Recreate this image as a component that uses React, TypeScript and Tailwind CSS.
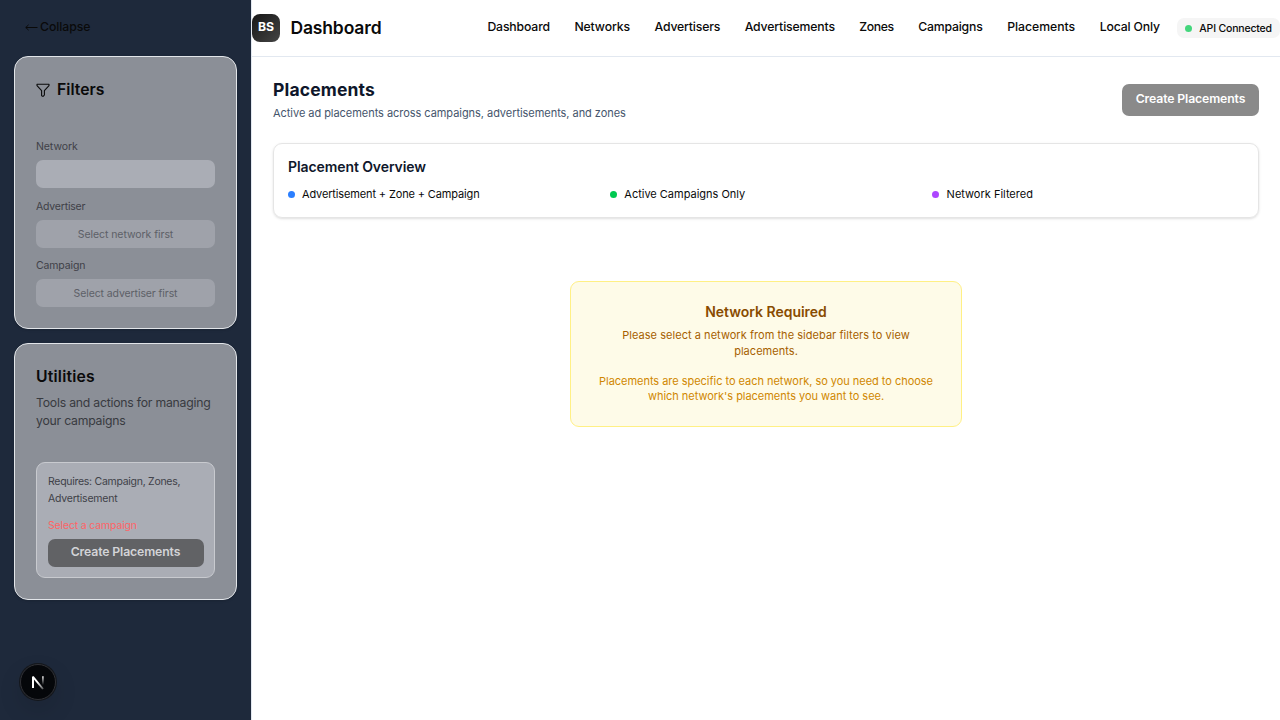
import type { ReactNode } from "react";

const navItems = [
  { label: "Dashboard", box: "w-[87px] tracking-[-0.15px]" },
  { label: "Networks", box: "w-[80.2px] tracking-[-0.12px]" },
  { label: "Advertisers", box: "w-[90.1px] tracking-[-0.18px]" },
  { label: "Advertisements", box: "w-[114.5px] tracking-[-0.15px]" },
  { label: "Zones", box: "w-[59px] tracking-[-0.35px]" },
  { label: "Campaigns", box: "w-[89px] tracking-[-0.19px]" },
  { label: "Placements", box: "w-[92.5px] tracking-[-0.03px]" },
  { label: "Local Only", box: "w-[77.2px] tracking-[-0.16px]" },
];

function SidebarCard({ className, children }: { className: string; children: ReactNode }) {
  return (
    <section className={`flex flex-col rounded-[14px] border border-[#e2e5e9] bg-[#8b8f97] px-[21px] shadow-sm ${className}`}>
      {children}
    </section>
  );
}

function FilterField({ label, labelClass, children }: { label: string; labelClass: string; children: ReactNode }) {
  return (
    <div className="flex flex-col">
      <span className={`mb-[6px] h-[14px] text-[10.5px] leading-[14px] text-[#404148] ${labelClass}`}>{label}</span>
      {children}
    </div>
  );
}

function OverviewItem({ dot, className, children }: { dot: string; className: string; children: ReactNode }) {
  return (
    <div className={`flex items-center text-[11px] leading-4 text-[#0a0a0a] ${className}`}>
      <span className={`size-[7px] rounded-full ${dot}`} />
      <span>{children}</span>
    </div>
  );
}

function NextBadge() {
  return (
    <div className="flex size-9 items-center justify-center rounded-full border border-[#303136] bg-[#05070a] shadow-[0_0_0_1px_#14171c,0_10px_24px_rgba(0,0,0,0.12)]">
      <svg width="14" height="16" viewBox="0 0 14 16" fill="none">
        <defs>
          <linearGradient id="stem" x1="0" y1="2" x2="0" y2="11" gradientUnits="userSpaceOnUse">
            <stop stopColor="#fff" stopOpacity="0.9" />
            <stop offset="1" stopColor="#fff" stopOpacity="0" />
          </linearGradient>
          <linearGradient id="diagonal" x1="7" y1="8" x2="12.5" y2="15" gradientUnits="userSpaceOnUse">
            <stop stopColor="#fff" />
            <stop offset="1" stopColor="#fff" stopOpacity="0.3" />
          </linearGradient>
        </defs>
        <path d="M2 2.8L12 15" stroke="url(#diagonal)" strokeWidth="1.9" />
        <path d="M2 14V2.4" stroke="#fff" strokeWidth="2" />
        <path d="M11.9 2.2V12" stroke="url(#stem)" strokeWidth="1.7" />
      </svg>
    </div>
  );
}

export default function App() {
  return (
    <div className="flex h-[720px] w-[1280px] overflow-hidden bg-white font-['Inter',sans-serif] text-[#0a0a0a]">
      <aside className="relative flex w-[252px] shrink-0 flex-col border-r border-[#e2e8f0] bg-[#1e293b] px-[14px]">
        <button className="flex h-14 items-center gap-[2px] pb-[2px] pl-[11px] text-[12.25px] font-[450]">
          <svg width="13" height="10" viewBox="0 0 13 10" fill="none" stroke="currentColor" strokeWidth="1">
            <path d="M12.5 5.5H0.8M3.6 2.8L0.8 5.5L3.6 8.2" />
          </svg>
          <span className="tracking-[-0.06px]">Collapse</span>
        </button>

        <SidebarCard className="h-[273px] pt-[21px]">
          <h2 className="flex h-6 items-center gap-[7px] text-[15.75px] font-semibold">
            <svg width="14" height="14" viewBox="0 0 14 14" fill="none" stroke="currentColor" strokeWidth="1.1" strokeLinejoin="round">
              <path d="M1 1.3H13V2.6L8.4 7.6V12L7.4 13.2H6.4L5.6 12.6V7.6L1 2.6Z" />
            </svg>
            <span>Filters</span>
          </h2>
          <div className="mt-[38px] flex flex-col">
            <FilterField label="Network" labelClass="tracking-[-0.08px]">
              <div className="h-7 rounded-[7px] bg-[#aaadb5]" />
            </FilterField>
            <div className="mt-[12px]">
              <FilterField label="Advertiser" labelClass="tracking-[-0.2px]">
                <div className="flex h-7 items-center justify-center rounded-[7px] bg-[#9fa2aa] pt-[2px] text-[10.5px] tracking-[-0.06px] text-[#5d6067]">Select network first</div>
              </FilterField>
            </div>
            <div className="mt-[11px]">
              <FilterField label="Campaign" labelClass="tracking-[-0.14px]">
                <div className="flex h-7 items-center justify-center rounded-[7px] bg-[#9fa2aa] pt-[2px] text-[10.5px] tracking-[-0.1px] text-[#5d6067]">Select advertiser first</div>
              </FilterField>
            </div>
          </div>
        </SidebarCard>

        <SidebarCard className="mt-[14px] h-[257px] pt-[21px]">
          <h2 className="h-6 text-[15.75px] leading-6 font-semibold tracking-[0.2px]">Utilities</h2>
          <p className="mt-[5px] text-[12.25px] leading-[18px] tracking-[-0.23px] whitespace-nowrap text-[#383a40]">
            Tools and actions for managing
            <br />
            your campaigns
          </p>
          <div className="mt-[32px] flex h-[116px] flex-col rounded-[9px] border border-[#c8cacf] bg-[#aaadb5] px-[11px] pt-[10px]">
            <p className="text-[10.5px] leading-[17px] whitespace-nowrap text-[#404148]">
              <span className="tracking-[-0.28px]">Requires: Campaign, Zones,</span>
              <br />
              <span className="tracking-[-0.22px]">Advertisement</span>
            </p>
            <p className="mt-[12px] text-[10.5px] leading-[14px] tracking-[-0.16px] text-[#ff6467]">Select a campaign</p>
            <button className="mt-[6px] flex h-7 w-[156px] items-center justify-center rounded-[7px] bg-[#616265] pr-px pb-[2px] text-[12.25px] font-semibold tracking-[-0.13px] text-[#d3d4d7]">
              Create Placements
            </button>
          </div>
        </SidebarCard>

        <div className="absolute top-[664px] left-[20px]">
          <NextBadge />
        </div>
      </aside>

      <div className="flex min-w-0 flex-1 flex-col">
        <header className="flex h-[57px] shrink-0 items-center border-b border-[#e2e8f0]">
          <div className="flex w-[235.4px] items-center gap-[10.4px]">
            <div className="flex size-7 items-center justify-center rounded-[8px] bg-linear-to-br from-[#171717] to-[#454545] pb-[2px] text-[12.25px] font-bold text-white">BS</div>
            <span className="text-[17.5px] font-semibold tracking-[-0.14px]">Dashboard</span>
          </div>
          <nav className="flex pb-[2px] text-[12.25px] leading-[18px] font-[450]">
            {navItems.map((item) => (
              <a key={item.label} className={`shrink-0 whitespace-nowrap ${item.box}`}>{item.label}</a>
            ))}
          </nav>
          <div className="flex h-5 w-[103px] shrink-0 items-center rounded-[7px] bg-[#f5f5f5] pl-2 text-[10.5px] font-[450] tracking-[-0.18px] whitespace-nowrap">
            <span className="mr-[7.5px] size-[7px] shrink-0 rounded-full bg-[#43d67c]" />
            <span className="pt-px">API Connected</span>
          </div>
        </header>

        <main className="flex flex-col px-[21px] pt-[21px]">
          <div className="flex items-center justify-between">
            <div>
              <h1 className="h-6 text-[17.5px] leading-6 font-bold tracking-[0.17px] text-[#0f172b]">Placements</h1>
              <p className="mt-[3px] text-[11px] leading-4 tracking-[-0.045px] text-[#45556c]">
                Active ad placements across campaigns, advertisements, and zones
              </p>
            </div>
            <button className="flex h-8 w-[137px] items-center justify-center rounded-[7px] bg-[#8a8a8a] text-[12.25px] font-semibold tracking-[-0.13px] text-white">
              Create Placements
            </button>
          </div>

          <section className="mt-[22px] h-[75px] rounded-[9px] border border-[#e5e5e5] px-[14px] pt-[13px] shadow-sm">
            <h2 className="text-[14px] leading-5 font-semibold tracking-[-0.09px] text-[#0f172b]">Placement Overview</h2>
            <div className="mt-[9px] grid grid-cols-[322px_322px_1fr]">
              <OverviewItem dot="bg-[#2b7fff]" className="gap-[7px] tracking-[-0.14px]">Advertisement + Zone + Campaign</OverviewItem>
              <OverviewItem dot="bg-[#00c950]" className="gap-[7.3px] tracking-[-0.01px]">Active Campaigns Only</OverviewItem>
              <OverviewItem dot="bg-[#ad46ff]" className="gap-[7.6px] tracking-normal">Network Filtered</OverviewItem>
            </div>
          </section>

          <section className="mt-[63px] flex h-[146px] w-[392px] flex-col self-center rounded-[9px] border border-[#fff085] bg-[#fefbe8] pt-[20px] text-center text-[11px] whitespace-nowrap">
            <h3 className="text-[14px] leading-5 font-semibold tracking-[-0.02px] text-[#894b00]">Network Required</h3>
            <p className="mt-[5px] leading-4 tracking-[0.04px] text-[#a65f00]">
              Please select a network from the sidebar filters to view
              <br />
              placements.
            </p>
            <p className="mt-[15px] leading-[15px] tracking-[-0.03px] text-[#d08700]">
              Placements are specific to each network, so you need to choose
              <br />
              which network's placements you want to see.
            </p>
          </section>
        </main>
      </div>
    </div>
  );
}
